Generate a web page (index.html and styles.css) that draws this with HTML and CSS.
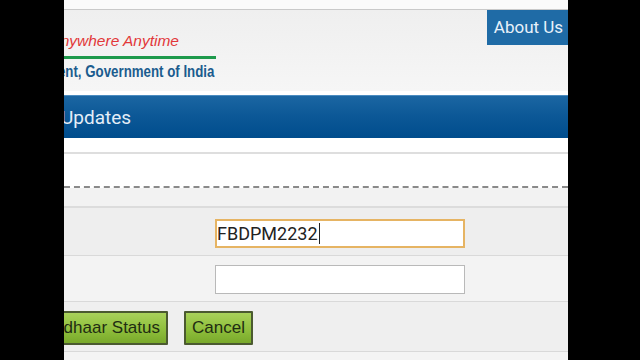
FILE: index.html
```html
<!DOCTYPE html>
<html>
<head>
<meta charset="utf-8">
<link rel="stylesheet" href="styles.css">
</head>
<body>
<div class="frame">
  <div class="bar-side bar-left"></div>
  <div class="page">
    <div class="top-strip"></div>
    <header class="header">
      <div class="brand">
        <div class="tagline"><span>Anywhere Anytime</span></div>
        <div class="green-rule"></div>
        <div class="subtitle"><span>Department, Government of India</span></div>
      </div>
      <a class="about">About Us</a>
    </header>
    <div class="gap-white"></div>
    <div class="titlebar"><span class="title">Updates</span></div>
    <div class="blank-a"></div>
    <div class="blank-b"></div>
    <div class="dashed"></div>
    <div class="strip"></div>
    <div class="form-row row-1">
      <div class="field focused"><span>FBDPM2232</span><span class="caret"></span></div>
    </div>
    <div class="form-row row-2">
      <div class="field"></div>
    </div>
    <div class="form-row row-3">
      <div class="btn-slot"><button class="btn">Check Aadhaar Status</button></div>
      <button class="btn">Cancel</button>
    </div>
    <div class="bottom"></div>
  </div>
  <div class="bar-side bar-right"></div>
</div>
</body>
</html>
```
FILE: styles.css
```css
html, body {
  margin: 0;
  padding: 0;
  background: #000;
  width: 640px;
  height: 360px;
  overflow: hidden;
}

.frame {
  display: flex;
  width: 640px;
  height: 360px;
}

.bar-side {
  background: #000;
}

.bar-left {
  flex: 0 0 64px;
}

.bar-right {
  flex: 1 1 0;
}

.page {
  flex: 0 0 504px;
  width: 504px;
  height: 360px;
  overflow: hidden;
  background: #fff;
  display: flex;
  flex-direction: column;
  box-shadow: inset -2px 0 0 #e2e2e2;
}

.top-strip {
  height: 9px;
  background: #fafafa;
  border-bottom: 1px solid #c9c9c9;
  flex: none;
}

.header {
  flex: none;
  height: 81px;
  display: flex;
  justify-content: space-between;
  align-items: flex-start;
  background: linear-gradient(#efefef, #f6f6f6);
}

.brand {
  width: 152px;
  display: flex;
  flex-direction: column;
  align-items: flex-end;
  padding-top: 22px;
}

.tagline {
  display: flex;
  justify-content: flex-end;
  width: 152px;
  padding-right: 37px;
  box-sizing: border-box;
  white-space: nowrap;
  font-family: "Liberation Sans", Arial, sans-serif;
  font-style: italic;
  font-size: 15.5px;
  line-height: 18px;
  color: #e2383a;
}

.green-rule {
  width: 152px;
  height: 3px;
  background: #1e9a4c;
  margin-top: 6px;
}

.subtitle {
  display: flex;
  justify-content: flex-end;
  width: 152px;
  padding-right: 2px;
  box-sizing: border-box;
  white-space: nowrap;
  margin-top: 3px;
}

.subtitle span {
  display: inline-block;
  font-family: "Liberation Sans", Arial, sans-serif;
  font-weight: bold;
  font-size: 16px;
  line-height: 19px;
  color: #1b5c8e;
  transform: scaleX(0.83);
  transform-origin: right center;
}

.about {
  width: 81px;
  height: 35px;
  background: #1f6ba6;
  color: #e8f1fa;
  font-family: Roboto, "Liberation Sans", sans-serif;
  font-size: 17px;
  line-height: 35px;
  text-align: center;
  padding-left: 2px;
  box-sizing: border-box;
  white-space: nowrap;
}

.gap-white {
  flex: none;
  height: 4px;
  background: #fff;
  border-bottom: 1px solid #4c8cc0;
}

.titlebar {
  flex: none;
  height: 42px;
  background: linear-gradient(#1b66a2, #0b5796 50%, #004d8d);
  display: flex;
  align-items: center;
  overflow: hidden;
}

.title {
  font-family: Roboto, "Liberation Sans", sans-serif;
  font-size: 19px;
  color: #e4eef8;
  margin-left: -3px;
}

.blank-a {
  flex: none;
  height: 14px;
  background: #fff;
  border-bottom: 2px solid #dedede;
}

.blank-b {
  flex: none;
  height: 32px;
  background: #fff;
}

.dashed {
  flex: none;
  height: 0;
  border-top: 2px dashed #8a8a8a;
}

.strip {
  flex: none;
  height: 18px;
  background: #f2f2f2;
  border-bottom: 2px solid #dcdcdc;
}

.form-row {
  flex: none;
  display: flex;
  align-items: flex-start;
  border-bottom: 1px solid #d9d9d9;
}

.row-1 {
  height: 48px;
  background: #eeeeee;
  padding-left: 151px;
  padding-top: 11px;
  box-sizing: border-box;
}

.row-2 {
  height: 46px;
  background: #f3f3f3;
  padding-left: 151px;
  padding-top: 9px;
  box-sizing: border-box;
}

.field {
  width: 250px;
  height: 29px;
  box-sizing: border-box;
  background: #fff;
  border: 1px solid #b9b9b9;
  display: flex;
  align-items: center;
  padding-left: 1px;
  font-family: Roboto, "Liberation Sans", sans-serif;
  font-size: 18px;
  color: #222;
}

.field.focused {
  border: 2px solid #e6b463;
  padding-left: 0;
}

.caret {
  display: inline-block;
  width: 1px;
  height: 21px;
  background: #222;
  margin-left: 1px;
}

.row-3 {
  height: 50px;
  background: #efefef;
  padding-top: 9px;
  box-sizing: border-box;
  gap: 16px;
}

.btn-slot {
  width: 104px;
  display: flex;
  justify-content: flex-end;
  white-space: nowrap;
}

.btn {
  flex: none;
  height: 34px;
  box-sizing: border-box;
  padding: 0 6px;
  border: 2px solid #4b5a30;
  border-radius: 1px;
  background: linear-gradient(#a9d25a, #8fbf3c 55%, #79a92b);
  font-family: "Liberation Sans", Arial, sans-serif;
  font-size: 17px;
  color: #1f2d12;
  white-space: nowrap;
}

.bottom {
  flex: 1 1 auto;
  background: #f4f4f4;
}
```
